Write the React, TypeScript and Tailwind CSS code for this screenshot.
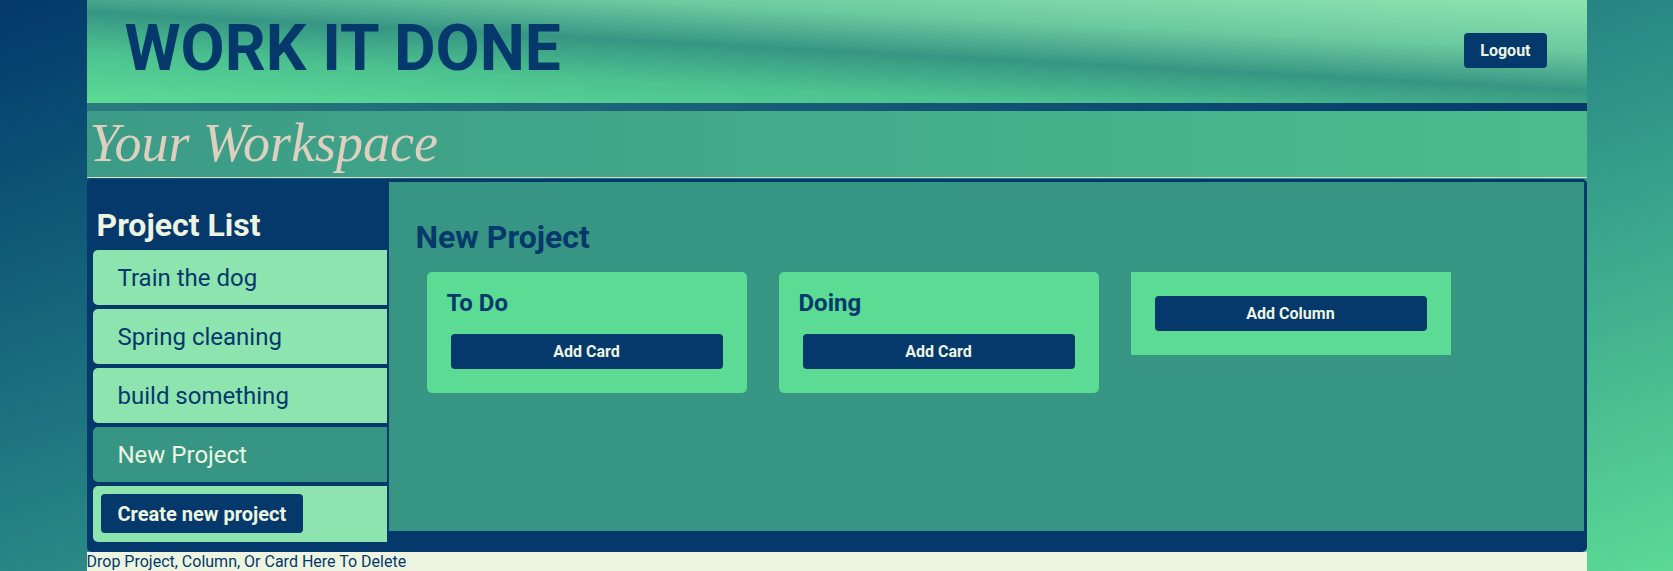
import React, { useState } from "react";

const projects = ["Train the dog", "Spring cleaning", "build something", "New Project"];

const columns = ["To Do", "Doing"];

const App = () => {
  const [active, setActive] = useState("New Project");

  return (
    <div className="min-h-screen bg-gradient-to-br from-[#05386B] to-[#5CDB95] font-['Roboto',sans-serif]">
      <div className="mx-auto w-[1500px]">
        {/* Header */}
        <header className="flex h-[103px] items-start justify-between bg-[linear-gradient(183deg,#8ee4af_0%,#6ccaa0_28%,#379683_50%,#4cc290_72%,#5cdb95_100%)] pl-[38px] pr-[40px]">
          <h1 className="mt-[17px] text-[64px] font-bold leading-[64px] text-[#05386B]">
            WORK IT DONE
          </h1>
          <button className="mt-[33px] h-[35px] rounded-[4px] bg-[#05386B] px-[16px] text-[16px] font-bold text-[#EDF5E1]">
            Logout
          </button>
        </header>
        <div className="h-[8px] bg-gradient-to-r from-[#2b7b7e] to-[#05386B]" />

        {/* Workspace title */}
        <div className="flex h-[67px] items-start border-b border-[#d7dcc6] bg-gradient-to-r from-[#3c9b86] to-[#4cbc8e] pl-[3px]">
          <h2 className="mt-[2px] font-['Liberation_Serif',serif] text-[54px] italic leading-[60px] text-[#ddd0c0]">
            Your Workspace
          </h2>
        </div>

        {/* Board */}
        <div className="mt-[1px] flex h-[373px] rounded-[5px] bg-[#05386B]">
          <aside className="flex w-[302px] flex-col pl-[6px] pr-[2px] pt-[26px]">
            <h2 className="pl-[4px] text-[32px] font-bold leading-[40px] text-[#EDF5E1]">
              Project List
            </h2>
            <div className="mt-[5px] flex flex-col gap-[4px]">
              {projects.map((p) => (
                <div
                  key={p}
                  onClick={() => setActive(p)}
                  className={`flex h-[55px] cursor-pointer items-center rounded-l-[5px] pl-[25px] text-[24px] leading-[32px] ${
                    active === p
                      ? "bg-[#379683] text-[#EDF5E1]"
                      : "bg-[#8EE4AF] text-[#05386B]"
                  }`}
                >
                  {p}
                </div>
              ))}
              <div className="flex h-[56px] items-start rounded-l-[5px] bg-[#8EE4AF] pl-[8px] pt-[8px]">
                <button className="h-[39px] rounded-[4px] bg-[#05386B] px-[17px] text-[20px] font-bold leading-[28px] text-[#EDF5E1]">
                  Create new project
                </button>
              </div>
            </div>
          </aside>

          <main className="mb-[21px] mr-[3px] mt-[3px] flex-1 bg-[#379683] pl-[27px] pt-[35px]">
            <h2 className="text-[32px] font-bold leading-[40px] text-[#05386B]">
              {active}
            </h2>
            <div className="ml-[11px] mt-[15px] flex items-start gap-[32px]">
              {columns.map((c) => (
                <div key={c} className="w-[320px] rounded-[5px] bg-[#5CDB95] pb-[24px] pt-[15px]">
                  <h3 className="pl-[20px] text-[24px] font-bold leading-[32px] text-[#05386B]">
                    {c}
                  </h3>
                  <button className="mx-[24px] mt-[15px] h-[35px] w-[272px] rounded-[4px] bg-[#05386B] text-[16px] font-bold text-[#EDF5E1]">
                    Add Card
                  </button>
                </div>
              ))}
              <div className="w-[320px] bg-[#5CDB95] p-[24px]">
                <button className="h-[35px] w-[272px] rounded-[4px] bg-[#05386B] text-[16px] font-bold text-[#EDF5E1]">
                  Add Column
                </button>
              </div>
            </div>
          </main>
        </div>

        {/* Delete drop zone */}
        <footer className="h-[30px] bg-[#EDF5E1] text-[16px] leading-[19px] text-[#05386B]">
          Drop Project, Column, Or Card Here To Delete
        </footer>
      </div>
    </div>
  );
};

export default App;
